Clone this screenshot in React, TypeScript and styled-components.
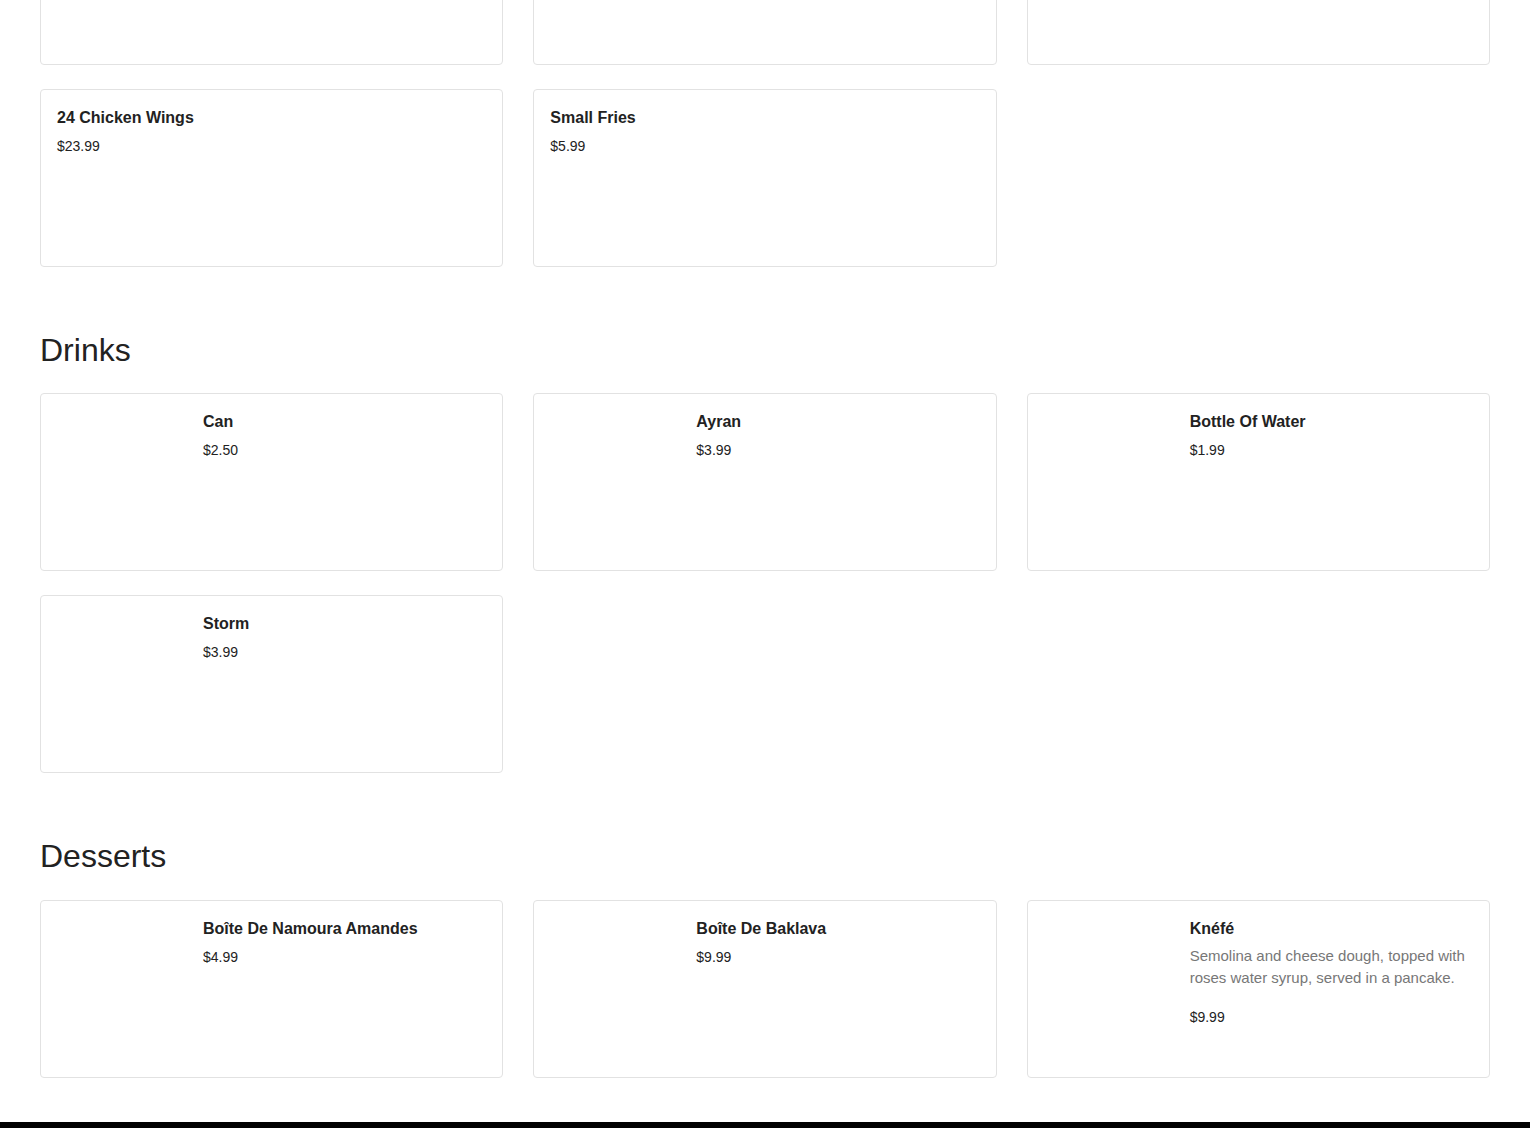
import styled, { createGlobalStyle } from "styled-components";

type Item = {
  name?: string;
  price?: string;
  description?: string;
  image?: boolean;
};

type Section = {
  title?: string;
  items: Item[];
};

// the first section is scrolled past; only the bottom of its first row shows
const sections: Section[] = [
  {
    items: [
      {},
      {},
      {},
      { name: "24 Chicken Wings", price: "$23.99" },
      { name: "Small Fries", price: "$5.99" },
    ],
  },
  {
    title: "Drinks",
    items: [
      { name: "Can", price: "$2.50", image: true },
      { name: "Ayran", price: "$3.99", image: true },
      { name: "Bottle Of Water", price: "$1.99", image: true },
      { name: "Storm", price: "$3.99", image: true },
    ],
  },
  {
    title: "Desserts",
    items: [
      { name: "Boîte De Namoura Amandes", price: "$4.99", image: true },
      { name: "Boîte De Baklava", price: "$9.99", image: true },
      {
        name: "Knéfé",
        price: "$9.99",
        image: true,
        description:
          "Semolina and cheese dough, topped with roses water syrup, served in a pancake.",
      },
    ],
  },
];

export default function App() {
  return (
    <>
      <GlobalStyle />
      <Page>
        {sections.map((section, i) => (
          <MenuSection key={i}>
            {section.title && <SectionTitle>{section.title}</SectionTitle>}
            <Grid>
              {section.items.map((item, j) => (
                <Card key={j}>
                  {item.image && <Thumb />}
                  {item.name && (
                    <Info>
                      <Name>{item.name}</Name>
                      {item.description && (
                        <Description>{item.description}</Description>
                      )}
                      <Price>{item.price}</Price>
                    </Info>
                  )}
                </Card>
              ))}
            </Grid>
          </MenuSection>
        ))}
      </Page>
      <Footer />
    </>
  );
}

const GlobalStyle = createGlobalStyle`
  * {
    box-sizing: border-box;
  }

  body {
    margin: 0;
    background: #fff;
    color: #222;
    font-family: "Liberation Sans", Arial, sans-serif;
  }
`;

const Page = styled.main`
  padding: 0 40px;
  margin-top: -113px;
`;

const MenuSection = styled.section`
  & + & {
    margin-top: 64px;
  }
`;

const SectionTitle = styled.h2`
  font-size: 32px;
  font-weight: 400;
  line-height: 1.2;
  margin: 0 0 24px;
  color: #222;
`;

const Grid = styled.div`
  display: grid;
  grid-template-columns: repeat(3, 1fr);
  gap: 24px 30px;
`;

const Card = styled.div`
  display: flex;
  gap: 16px;
  min-height: 178px;
  padding: 17px 16px 16px;
  border: 1px solid #e2e2e2;
  border-radius: 4px;
  background: #fff;
`;

const Thumb = styled.div`
  flex: 0 0 130px;
  height: 143px;
`;

const Info = styled.div`
  display: flex;
  flex-direction: column;
  min-width: 0;
`;

const Name = styled.h3`
  font-size: 16px;
  font-weight: 700;
  line-height: 22px;
  margin: 0 0 3px;
  color: #222;
`;

const Description = styled.p`
  font-size: 15px;
  line-height: 22px;
  margin: 2px 0 14px;
  color: #777;
`;

const Price = styled.span`
  font-size: 14px;
  line-height: 20px;
  margin-top: 4px;
  color: #222;
`;

const Footer = styled.footer`
  margin-top: 44px;
  height: 200px;
  background: #000;
`;
